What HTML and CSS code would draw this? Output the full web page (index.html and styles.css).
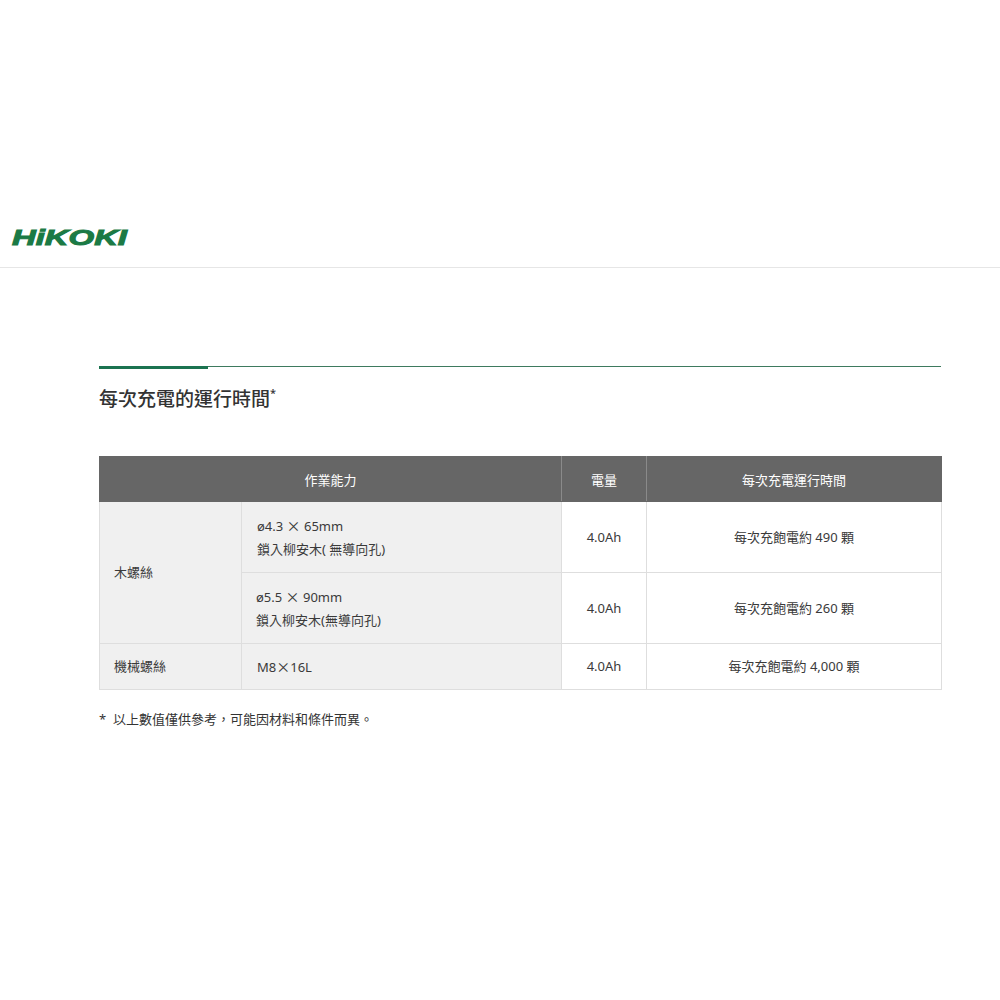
FILE: index.html
```html
<!DOCTYPE html>
<html lang="zh-Hant">
<head>
<meta charset="utf-8">
<title>HiKOKI</title>
<link rel="stylesheet" href="styles.css">
</head>
<body>
<header class="site-header">
  <svg class="logo" width="124" height="24" viewBox="0 0 124 24" aria-label="HiKOKI">
    <text x="2" y="20" textLength="115" lengthAdjust="spacingAndGlyphs" class="logo-text">HiKOKI</text>
  </svg>
</header>
<main class="content">
  <div class="rule"><span class="rule-accent"></span><span class="rule-line"></span></div>
  <h2 class="title">每次充電的運行時間<sup class="mark">*</sup></h2>
  <table class="spec">
    <colgroup>
      <col class="c1"><col class="c2"><col class="c3"><col class="c4">
    </colgroup>
    <thead>
      <tr><th colspan="2">作業能力</th><th>電量</th><th>每次充電運行時間</th></tr>
    </thead>
    <tbody>
      <tr class="tall">
        <td rowspan="2" class="gray">木螺絲</td>
        <td class="gray">ø4.3 <span class="x">×</span> 65mm<br>鎖入柳安木( 無導向孔)</td>
        <td class="center">4.0Ah</td>
        <td class="center">每次充飽電約 490 顆</td>
      </tr>
      <tr class="tall">
        <td class="gray">ø5.5 <span class="x">×</span> 90mm<br>鎖入柳安木(無導向孔)</td>
        <td class="center">4.0Ah</td>
        <td class="center">每次充飽電約 260 顆</td>
      </tr>
      <tr class="short">
        <td class="gray">機械螺絲</td>
        <td class="gray">M8<span class="x">×</span>16L</td>
        <td class="center">4.0Ah</td>
        <td class="center">每次充飽電約 4,000 顆</td>
      </tr>
    </tbody>
  </table>
  <p class="note">*&nbsp; 以上數值僅供參考，可能因材料和條件而異。</p>
</main>
</body>
</html>
```
FILE: styles.css
```css
html, body {
  margin: 0;
  padding: 0;
  background: #fff;
  font-family: "Noto Sans", "Noto Sans CJK TC", sans-serif;
  color: #333;
}
.site-header {
  height: 268px;
  box-sizing: border-box;
  display: flex;
  align-items: flex-end;
  padding: 0 0 18px 10px;
  border-bottom: 1px solid #e6e6e6;
}
.logo { display: block; overflow: visible; }
.logo-text {
  font-family: "Liberation Sans", Arial, sans-serif;
  font-weight: 700;
  font-style: italic;
  font-size: 22px;
  fill: #1b7a45;
  stroke: #1b7a45;
  stroke-width: 1;
}
.content {
  width: 842px;
  margin: 98px 0 0 99px;
}
.rule {
  display: flex;
  align-items: flex-start;
}
.rule-accent {
  width: 109px;
  height: 3px;
  background: #1b7350;
}
.rule-line {
  flex: 1;
  height: 1px;
  background: #3e7a5e;
}
.title {
  margin: 17px 0 0 0;
  font-size: 19px;
  font-weight: 500;
  line-height: 26px;
  color: #333;
}
.mark {
  font-size: 11px;
  vertical-align: 9px;
  line-height: 0;
}
.spec {
  margin-top: 44px;
  width: 842px;
  border-collapse: collapse;
  table-layout: fixed;
  font-size: 13px;
}
.c1 { width: 142px; }
.c2 { width: 320px; }
.c3 { width: 85px; }
.c4 { width: 295px; }
.spec th {
  height: 44px;
  padding: 0;
  background: #666;
  color: #fff;
  font-weight: 400;
  border: 1px solid #666;
  border-left-color: #8a8a8a;
  border-right-color: #8a8a8a;
}
.spec th:first-child { border-left-color: #666; }
.spec th:last-child { border-right-color: #666; }
.spec td {
  border: 1px solid #dedede;
  padding: 0 14px;
  line-height: 23px;
  color: #3a3a3a;
}
.spec td.gray { background: #f0f0f0; }
.spec td.gray + td.gray { padding-left: 15px; }
.spec td.center { text-align: center; }
.spec tr.tall td { height: 70px; }
.spec tr.short td { height: 45px; }
.x {
  font-family: "Noto Sans CJK TC", sans-serif;
  font-size: 14px;
}
.note {
  margin: 19px 0 0 0;
  font-size: 13px;
  line-height: 20px;
  color: #333;
}
```
